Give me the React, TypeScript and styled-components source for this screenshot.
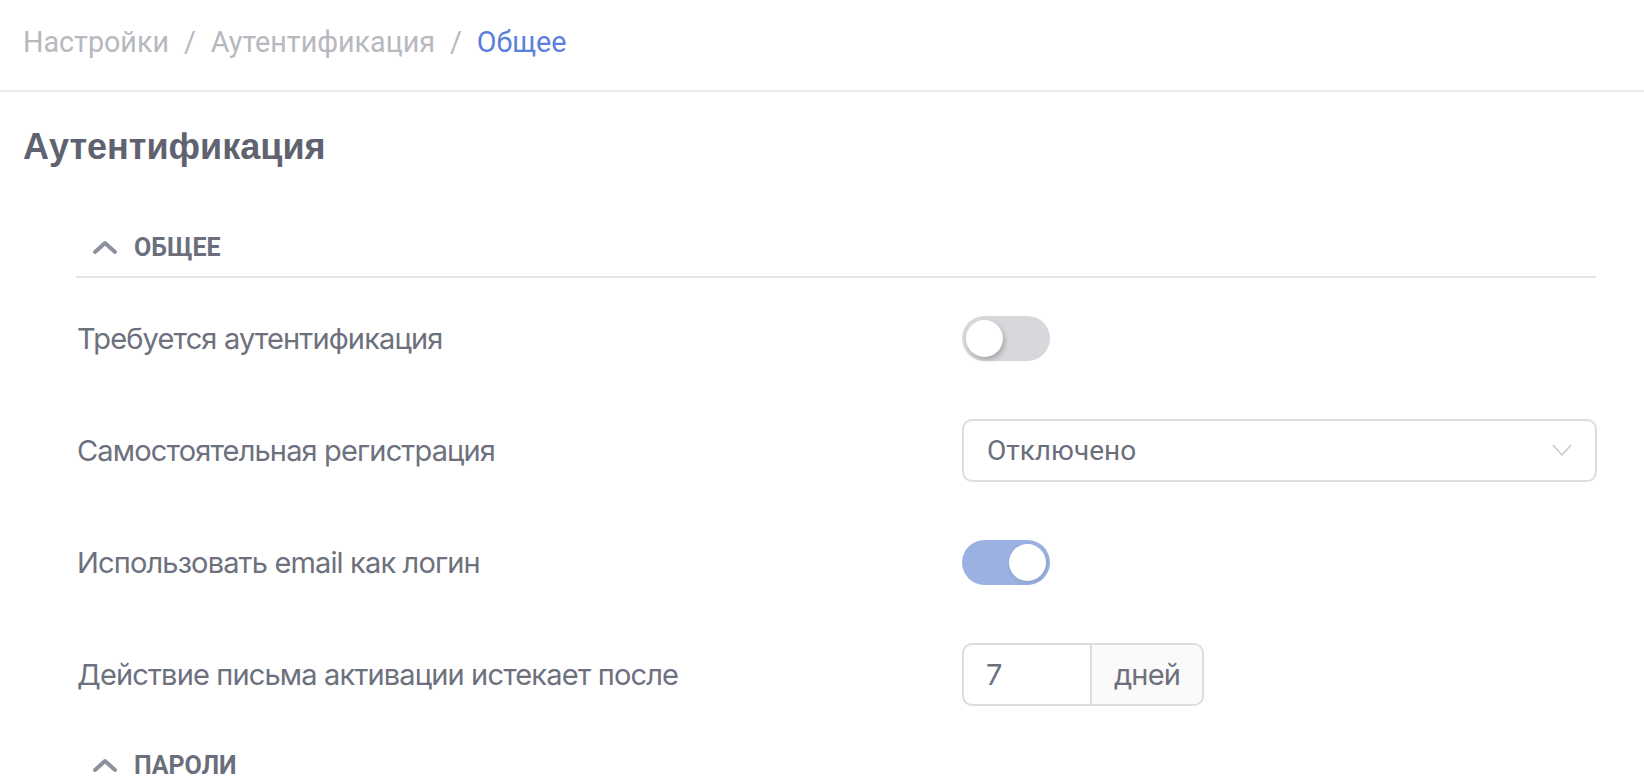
import React from "react";
import styled, { createGlobalStyle } from "styled-components";

const Global = createGlobalStyle`
  html, body { margin: 0; padding: 0; background: #ffffff; }
  body { font-family: Inter, "Liberation Sans", sans-serif; }
  * { box-sizing: border-box; }
`;

const Page = styled.div`
  width: 1644px;
  height: 780px;
  overflow: hidden;
  background: #fff;
`;

const TopBar = styled.header`
  height: 92px;
  border-bottom: 2px solid #ececee;
  display: flex;
  align-items: center;
  padding: 0 0 6px 23px;
  font-family: Roboto, "Liberation Sans", sans-serif;
  font-size: 28.7px;
`;

const Crumb = styled.span<{ $active?: boolean }>`
  color: ${(p) => (p.$active ? "#5a7fdc" : "#b6b9be")};
`;

const Sep = styled.span`
  color: #b6b9be;
  margin: 0 15px;
`;

const Main = styled.main`
  padding: 0 48px 0 23px;
`;

const Title = styled.h1`
  margin: 33px 0 0;
  font-family: "Liberation Sans", Arial, sans-serif;
  font-weight: 700;
  font-size: 36px;
  line-height: 1.2;
  color: #5f6370;
`;

const Sections = styled.div`
  margin: 50px 0 0 53px;
  display: flex;
  flex-direction: column;
  gap: 6px;
`;

const SectionHeader = styled.div<{ $open?: boolean }>`
  height: 60px;
  display: flex;
  align-items: center;
  gap: 16px;
  padding: 0 0 0 16px;
  border-bottom: 2px solid ${(p) => (p.$open ? "#e4e5e8" : "transparent")};
  font-family: Roboto, "Liberation Sans", sans-serif;
  font-weight: 700;
  font-size: 25px;
  letter-spacing: 0;
  color: #6b6f7c;
  text-transform: uppercase;
`;

const Rows = styled.div`
  padding-top: 4px;
`;

const Row = styled.div`
  height: 112px;
  display: grid;
  grid-template-columns: 886px 1fr;
  align-items: center;
`;

const Label = styled.div`
  padding-left: 1px;
  font-family: Inter, "Liberation Sans", sans-serif;
  font-size: 29px;
  letter-spacing: -0.85px;
  color: #6d717e;
`;

const Track = styled.div<{ $on?: boolean }>`
  width: 88px;
  height: 45px;
  border-radius: 23px;
  background: ${(p) => (p.$on ? "#9bb1e1" : "#d7d8db")};
  display: flex;
  align-items: center;
  justify-content: ${(p) => (p.$on ? "flex-end" : "flex-start")};
  padding: 0 4px;
`;

const Knob = styled.div<{ $on?: boolean }>`
  width: 37px;
  height: 37px;
  border-radius: 50%;
  background: #fff;
  box-shadow: ${(p) =>
    p.$on ? "1px 2px 4px rgba(60,70,100,0.15)" : "2px 3px 5px rgba(0,0,0,0.22)"};
`;

const SelectBox = styled.div`
  width: 635px;
  height: 63px;
  border: 2px solid #dddddf;
  border-radius: 10px;
  display: flex;
  align-items: center;
  justify-content: space-between;
  padding: 0 23px 0 23px;
  font-family: Roboto, "Liberation Sans", sans-serif;
  font-size: 28px;
  color: #6b6f7a;
`;

const Group = styled.div`
  width: 242px;
  height: 63px;
  border: 2px solid #dcdcde;
  border-radius: 10px;
  display: grid;
  grid-template-columns: 128px 1fr;
  overflow: hidden;
  font-family: Inter, "Liberation Sans", sans-serif;
  font-size: 29px;
  letter-spacing: -0.8px;
  color: #6d717e;
`;

const GroupInput = styled.div`
  display: flex;
  align-items: center;
  padding-left: 22px;
  border-right: 2px solid #dcdcde;
`;

const Addon = styled.div`
  display: flex;
  align-items: center;
  justify-content: center;
  background: #fafafa;
`;

const Chevron = ({ color = "#8d919e" }: { color?: string }) => (
  <svg width="26" height="16" viewBox="0 0 26 16" fill="none">
    <path d="M3 13 L13 4 L23 13" stroke={color} strokeWidth="4" strokeLinecap="round" strokeLinejoin="round" />
  </svg>
);

const Toggle = ({ on }: { on?: boolean }) => (
  <Track $on={on}>
    <Knob $on={on} />
  </Track>
);

export default function App() {
  return (
    <Page>
      <Global />
      <TopBar>
        <Crumb>Настройки</Crumb>
        <Sep>/</Sep>
        <Crumb>Аутентификация</Crumb>
        <Sep>/</Sep>
        <Crumb $active>Общее</Crumb>
      </TopBar>
      <Main>
        <Title>Аутентификация</Title>
        <Sections>
          <div>
            <SectionHeader $open>
              <Chevron />
              <span>Общее</span>
            </SectionHeader>
            <Rows>
              <Row>
                <Label>Требуется аутентификация</Label>
                <div>
                  <Toggle />
                </div>
              </Row>
              <Row>
                <Label>Самостоятельная регистрация</Label>
                <SelectBox>
                  <span>Отключено</span>
                  <svg width="20" height="12" viewBox="0 0 20 12" fill="none">
                    <path d="M1 1 L10 11 L19 1" stroke="#c9cace" strokeWidth="1.5" />
                  </svg>
                </SelectBox>
              </Row>
              <Row>
                <Label>Использовать email как логин</Label>
                <div>
                  <Toggle on />
                </div>
              </Row>
              <Row>
                <Label>Действие письма активации истекает после</Label>
                <Group>
                  <GroupInput>7</GroupInput>
                  <Addon>дней</Addon>
                </Group>
              </Row>
            </Rows>
          </div>
          <div>
            <SectionHeader>
              <Chevron />
              <span>Пароли</span>
            </SectionHeader>
          </div>
        </Sections>
      </Main>
    </Page>
  );
}
